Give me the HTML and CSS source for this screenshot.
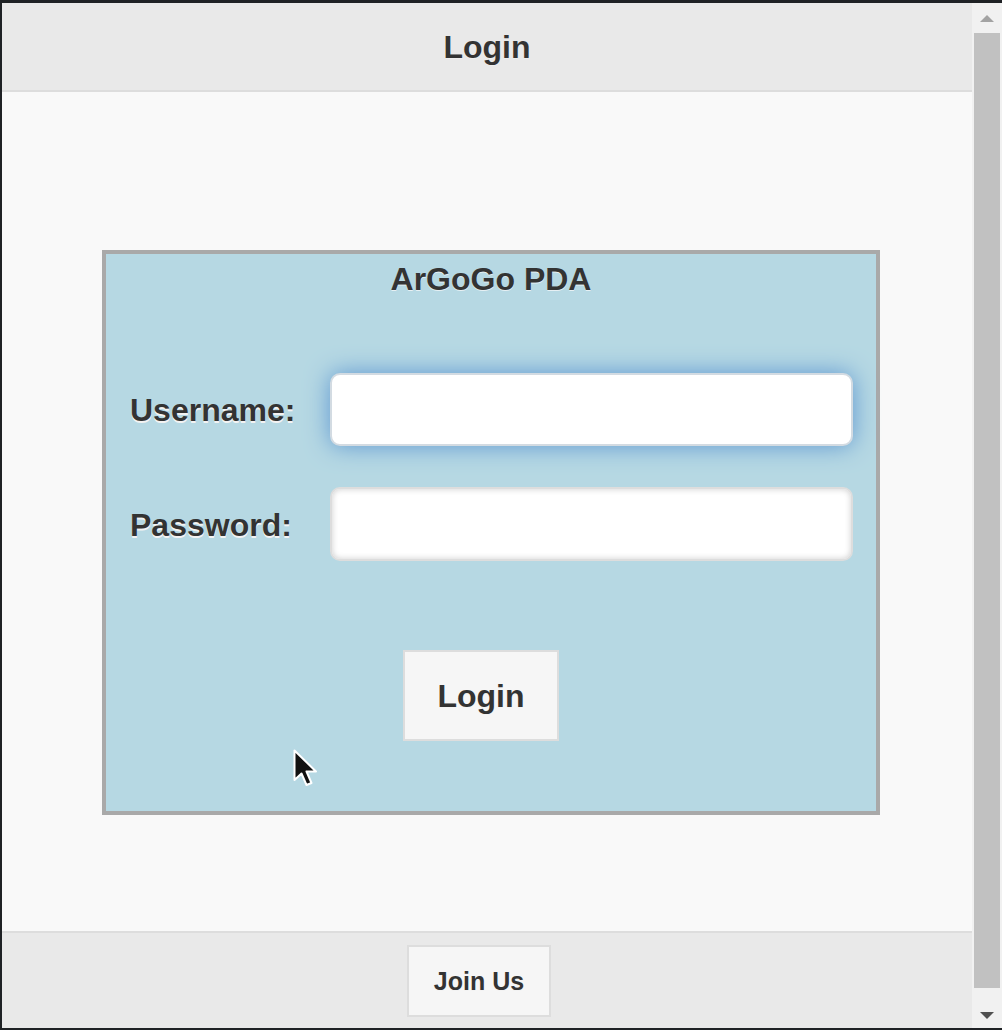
FILE: index.html
```html
<!DOCTYPE html>
<html>
<head>
<meta charset="utf-8">
<title>Login</title>
<link rel="stylesheet" href="styles.css">
</head>
<body>
<div class="frame">
  <div class="page">
    <header class="hdr"><h1 class="hdr-title">Login</h1></header>
    <main class="content">
      <div class="panel">
        <h2 class="panel-title">ArGoGo PDA</h2>
        <div class="form">
          <label class="lbl" for="u">Username:</label>
          <input id="u" class="field field-focus" type="text">
          <label class="lbl" for="p">Password:</label>
          <input id="p" class="field field-inset" type="password">
        </div>
        <div class="actions"><button class="btn btn-login" type="button">Login</button></div>
      </div>
    </main>
    <footer class="ftr"><button class="btn btn-join" type="button">Join Us</button></footer>
  </div>
  <div class="scrollbar">
    <div class="sb-btn"><span class="sb-up"></span></div>
    <div class="sb-track"><div class="sb-thumb"></div></div>
    <div class="sb-btn sb-btn-down"><span class="sb-down"></span></div>
  </div>
  <svg class="cursor" width="26" height="42" viewBox="0 0 26 42">
    <path d="M1.5 1.5 L1.5 31 L8.5 24.5 L13.5 36 L18.5 34 L13.5 22.5 L23 22.5 Z" fill="#111" stroke="#fff" stroke-width="2" stroke-linejoin="round"/>
  </svg>
</div>
</body>
</html>
```

FILE: styles.css
```css
* { box-sizing: border-box; }
html, body { margin: 0; padding: 0; }
body { background: #1f2225; font-family: "Liberation Sans", Arial, sans-serif; color: #333; }

.frame {
  position: relative;
  width: 1002px;
  height: 1030px;
  display: flex;
  padding: 3px 0 2px 2px;
  background: #1f2225;
}

.page {
  width: 970px;
  display: flex;
  flex-direction: column;
}

.hdr {
  height: 89px;
  background: #e9e9e9;
  border-bottom: 2px solid #dddddd;
  text-align: center;
}
.hdr-title {
  margin: 0;
  padding-top: 26px;
  font-size: 32px;
  line-height: 37px;
  font-weight: bold;
  color: #333;
  text-shadow: 0 1px 0 #eeeeee;
}

.content {
  flex: 1;
  background: #f9f9f9;
}

.panel {
  margin: 158px 0 0 100px;
  width: 778px;
  height: 565px;
  border: 4px solid #a9a9a9;
  background: #b6d8e3;
}
.panel-title {
  margin: 0;
  padding-top: 7px;
  text-align: center;
  font-size: 32px;
  line-height: 37px;
  font-weight: bold;
  color: #333;
  text-shadow: 0 1px 0 #e6f0f4;
}

.form {
  margin-top: 75px;
  padding: 0 23px 0 24px;
  display: grid;
  grid-template-columns: 200px 523px;
  grid-template-rows: 73px 74px;
  row-gap: 41px;
}
.lbl {
  align-self: center;
  padding-top: 2px;
  font-size: 32px;
  line-height: 37px;
  font-weight: bold;
  color: #333;
  text-shadow: 0 2px 0 #f3f3f3;
}
.field {
  width: 523px;
  height: 100%;
  margin: 0;
  border: 2px solid #dddddd;
  border-radius: 10px;
  background: #fff;
  outline: none;
  font-size: 32px;
  padding: 0 16px;
}
.field-focus {
  border-color: #d3dbe2;
  box-shadow: 0 0 24px #5e97d1;
}
.field-inset {
  box-shadow: inset 0 0 6px rgba(0, 0, 0, 0.2);
}

.actions {
  margin: 89px 0 0 297px;
}

.btn {
  margin: 0;
  padding: 0;
  border: 2px solid #dddddd;
  background: #f6f6f6;
  color: #333;
  font-family: "Liberation Sans", Arial, sans-serif;
  font-weight: bold;
  text-shadow: 0 1px 0 #f3f3f3;
  cursor: pointer;
}
.btn-login {
  width: 156px;
  height: 91px;
  font-size: 32px;
  padding-top: 2px;
}

.ftr {
  height: 97px;
  background: #e9e9e9;
  border-top: 2px solid #dddddd;
  padding: 12px 0 0 405px;
}
.btn-join {
  width: 144px;
  height: 72px;
  font-size: 25px;
}

.scrollbar {
  width: 30px;
  display: flex;
  flex-direction: column;
  background: #f1f1f1;
}
.sb-btn {
  height: 30px;
  display: flex;
  justify-content: center;
  padding-top: 12px;
}
.sb-btn-down {
  height: 40px;
  padding-top: 24px;
}
.sb-up {
  width: 0;
  height: 0;
  border-left: 7px solid transparent;
  border-right: 7px solid transparent;
  border-bottom: 7px solid #a3a3a3;
}
.sb-down {
  width: 0;
  height: 0;
  border-left: 7px solid transparent;
  border-right: 7px solid transparent;
  border-top: 7px solid #505050;
}
.sb-track {
  flex: 1;
  padding: 0 2px;
}
.sb-thumb {
  height: 100%;
  background: #c1c1c1;
}

.cursor {
  position: absolute;
  left: 293px;
  top: 749px;
}
```
